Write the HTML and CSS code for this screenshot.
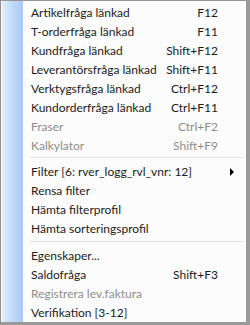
FILE: index.html
```html
<!DOCTYPE html>
<html lang="sv">
<head>
    <meta charset="UTF-8">
    <title>Snabbmeny</title>
    <link rel="stylesheet" href="styles.css">
</head>
<body>

    <!-- Kontextmeny -->
    <div class="menu">
        <div class="strip"></div>
        <div class="items">
            <div class="item"><span>Artikelfråga länkad</span><span class="key">F12</span></div>
            <div class="item"><span>T-orderfråga länkad</span><span class="key">F11</span></div>
            <div class="item"><span>Kundfråga länkad</span><span class="key">Shift+F12</span></div>
            <div class="item"><span>Leverantörsfråga länkad</span><span class="key">Shift+F11</span></div>
            <div class="item"><span>Verktygsfråga länkad</span><span class="key">Ctrl+F12</span></div>
            <div class="item"><span>Kundorderfråga länkad</span><span class="key">Ctrl+F11</span></div>
            <div class="item disabled"><span>Fraser</span><span class="key">Ctrl+F2</span></div>
            <div class="item disabled"><span>Kalkylator</span><span class="key">Shift+F9</span></div>

            <div class="sep"></div>

            <div class="item"><span>Filter [6: rver_logg_rvl_vnr: 12]</span><span class="key"></span><span class="arrow"></span></div>
            <div class="item"><span>Rensa filter</span></div>
            <div class="item"><span>Hämta filterprofil</span></div>
            <div class="item"><span>Hämta sorteringsprofil</span></div>

            <div class="sep"></div>

            <div class="item"><span>Egenskaper...</span></div>
            <div class="item"><span>Saldofråga</span><span class="key">Shift+F3</span></div>
            <div class="item disabled"><span>Registrera lev.faktura</span></div>
            <div class="item"><span>Verifikation [3-12]</span></div>
        </div>
    </div>

</body>
</html>
```

FILE: styles.css
```css
body {
    margin: 0;
    padding: 0;
    background-color: #9a9a9a;
    font-family: "Lato", "Open Sans", sans-serif;
    font-size: 12px;
    color: #1b1b1b;
}

/* meny */
.menu {
    width: 245px;
    height: 321px;
    display: flex;
    background: #fcfcfc;
    border: 1px solid #979797;
    border-left-color: #8e8e8e;
}

/* ikonkolumn */
.strip {
    width: 21px;
    margin-left: 1px;
    border-right: 1px solid #ffffff;
    background: linear-gradient(to right, #e4eefc 0%, #c4dbfa 45%, #a6c9f7 100%);
}

.items {
    flex: 1;
    display: flex;
    flex-direction: column;
    padding-top: 2px;
}

.item {
    height: 19px;
    display: grid;
    grid-template-columns: 1fr auto 28px;
    align-items: center;
    padding-left: 7px;
    white-space: nowrap;
}

.key {
    text-align: right;
}

.disabled {
    color: #8d8d8d;
}

.arrow {
    justify-self: center;
    width: 0;
    height: 0;
    border-top: 4px solid transparent;
    border-bottom: 4px solid transparent;
    border-left: 4px solid #000;
}

.sep {
    height: 8px;
    margin-left: 6px;
    margin-right: 2px;
    display: flex;
    flex-direction: column;
    justify-content: center;
}

.sep::before {
    content: "";
    display: block;
    border-top: 1px solid #e2e3e3;
    border-bottom: 1px solid #ffffff;
}
```
